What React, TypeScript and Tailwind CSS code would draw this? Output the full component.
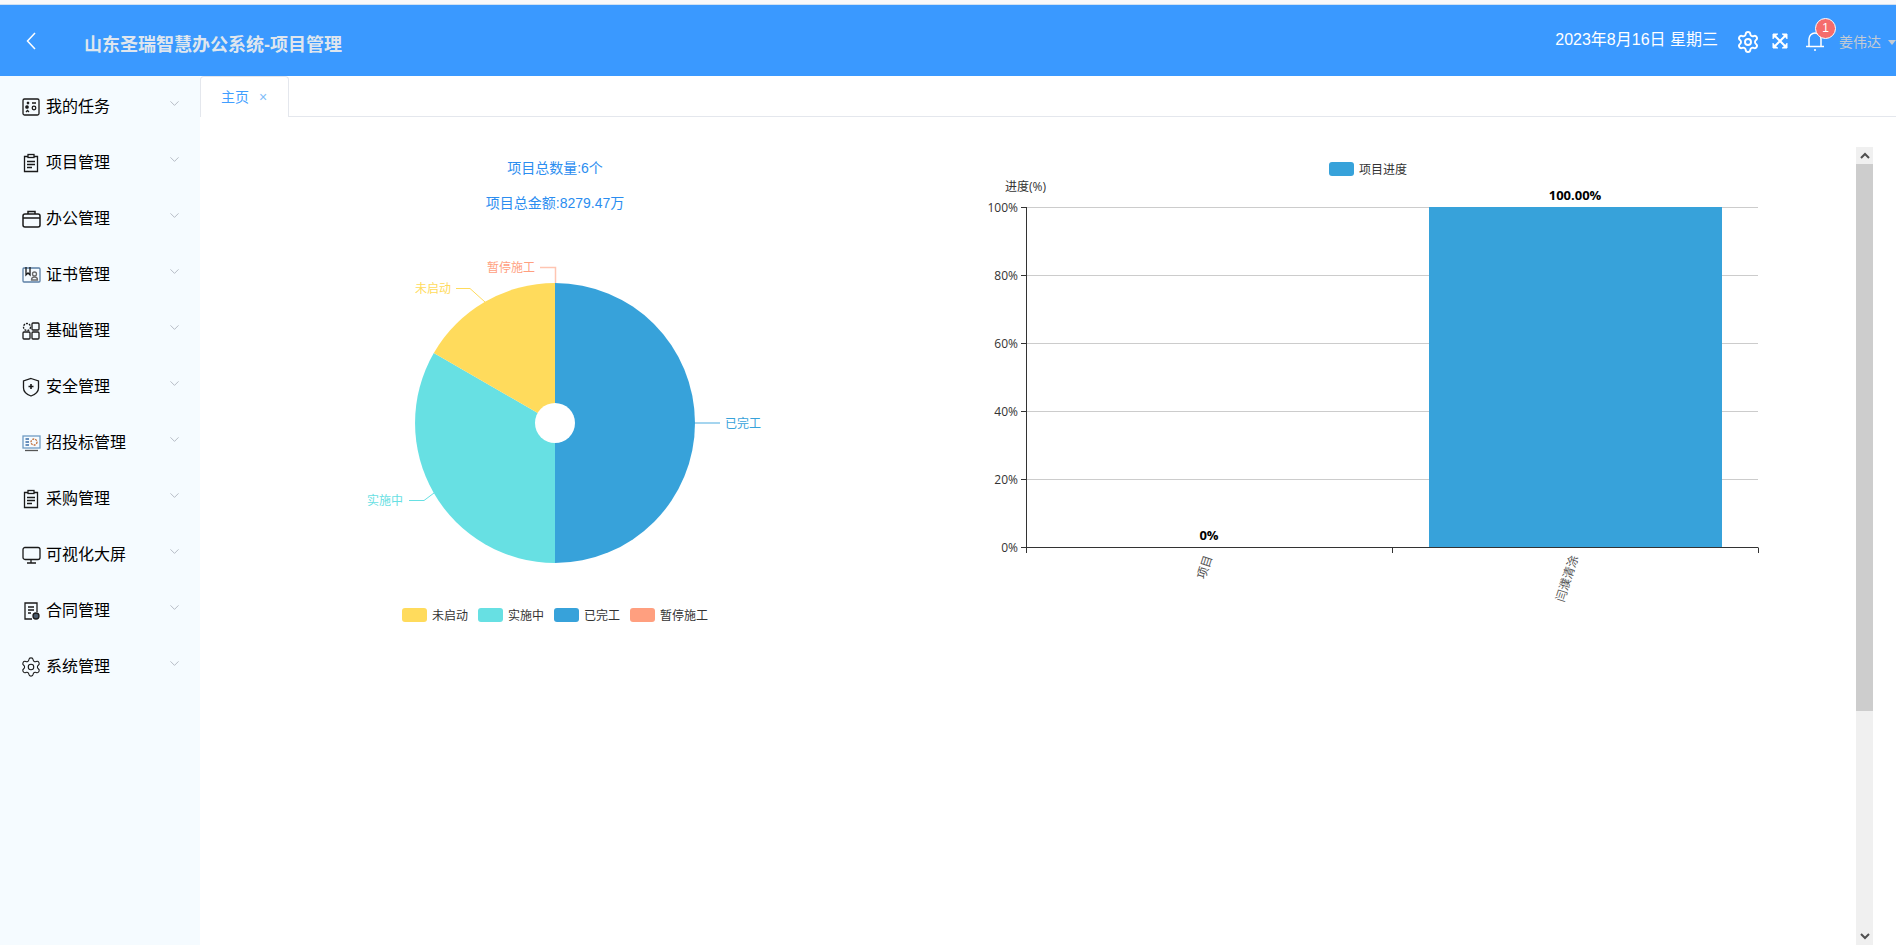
import React from "react";
import { ChevronDown, Settings } from "lucide-react";

const S = ({ children }: { children: React.ReactNode }) => (
  <svg width="20" height="20" viewBox="0 0 20 20" fill="none" stroke="#1a1a1a" strokeWidth="1.3" className="shrink-0">{children}</svg>
);

const icons: Record<string, React.ReactNode> = {
  task: <S><rect x="2" y="2" width="16" height="16" rx="1.5" /><circle cx="6" cy="10" r="1.2" fill="#1a1a1a" /><circle cx="13" cy="11" r="1.8" /><path d="M6 5l2 2M8 5l-2 2M11 6h4M5 15l1.5-1.5L8 15" /></S>,
  doc: <S><path d="M7 3.500H3.500v15H16.500v-15H13" /><rect x="7" y="1.500" width="6" height="3" /><path d="M6 8.500h8M6 11.500h8M6 14.500h5" /></S>,
  case: <S><rect x="2" y="5" width="17" height="13" rx="2" strokeWidth="1.500" /><path d="M7 5V2.500h7V5M2 9h17" strokeWidth="1.500" /></S>,
  cert: <S><rect x="2" y="3" width="17" height="14" rx="1" stroke="#5b7fa5" /><path d="M5 2v8l2-2 2 2V2" /><circle cx="13.500" cy="9" r="2" stroke="#6b6b6b" /><path d="M10.500 15c0-4 6-4 6 0z" stroke="#6b6b6b" /></S>,
  base: <S><circle cx="6" cy="6" r="3.500" strokeDasharray="2 1" /><rect x="11" y="2" width="7" height="7" rx="1" /><rect x="2" y="11" width="7" height="7" rx="1" /><rect x="11" y="11" width="7" height="7" rx="1" /></S>,
  shield: <S><path d="M10 1.500l7.500 2.500v7c0 4-3.500 6.500-7.500 8-4-1.500-7.500-4-7.500-8V4z" /><path d="M7.500 9.500h5M10 7v5" strokeWidth="1.600" /></S>,
  bid: <S><rect x="2" y="3" width="17" height="12" stroke="#6f9bc4" /><circle cx="13" cy="9" r="3" stroke="#c0703c" strokeDasharray="2 1" /><path d="M4.500 6h3.500M4.500 9h3.500M4.500 12h3.500" stroke="#3a6ea8" /><path d="M4 17.500h13" stroke="#555" /></S>,
  monitor: <S><rect x="2" y="2.500" width="17" height="12" rx="2" /><path d="M10 14.500v3M6 18h9" /></S>,
  contract: <S><path d="M11 18H4V2h12v9" /><path d="M7 6h6M7 9h6M7 12h3" /><circle cx="15" cy="15" r="3" fill="#4a5a6a" /></S>,
  gear: <Settings size={22} strokeWidth={1.200} color="#1a1a1a" className="-ml-[1px] shrink-0" />,
};

const menu: [string, string][] = [
  ["我的任务", "task"], ["项目管理", "doc"], ["办公管理", "case"], ["证书管理", "cert"], ["基础管理", "base"], ["安全管理", "shield"],
  ["招投标管理", "bid"], ["采购管理", "doc"], ["可视化大屏", "monitor"], ["合同管理", "contract"], ["系统管理", "gear"],
];

const cjk = { fontFamily: '"Liberation Sans", "Noto Sans CJK SC", sans-serif' };
const chartFont = '"Open Sans", "Noto Sans CJK SC", sans-serif';

function Pie() {
  const legend: [number, string, string][] = [[402, "#ffdb5c", "未启动"], [478, "#67e0e3", "实施中"], [554, "#37a2da", "已完工"], [630, "#ff9f7f", "暂停施工"]];
  return (
    <svg width="600" height="500" viewBox="250 130 600 500" className="shrink-0" fontFamily={chartFont} fontSize="12">
      <path d="M555 283A140 140 0 0 1 555 563Z" fill="#37a2da" />
      <path d="M555 563A140 140 0 0 1 433.800 353L555 423Z" fill="#67e0e3" />
      <path d="M433.800 353A140 140 0 0 1 555 283V423Z" fill="#ffdb5c" />
      <circle cx="555" cy="423" r="20" fill="#fff" />
      <path d="M540 267.500H555.500V283" fill="none" stroke="#ff9f7f" strokeOpacity="0.6" strokeWidth="1.500" />
      <path d="M456 288.500H470L485 302" fill="none" stroke="#ffdb5c" />
      <path d="M695 423H720" fill="none" stroke="#37a2da" strokeOpacity="0.6" strokeWidth="1.500" />
      <path d="M409 500.500H424L434 493" fill="none" stroke="#67e0e3" />
      <text x="487" y="271.500" fill="#ff9f7f">暂停施工</text>
      <text x="415" y="293" fill="#ffdb5c">未启动</text>
      <text x="725" y="427.500" fill="#37a2da">已完工</text>
      <text x="367" y="504.500" fill="#67e0e3">实施中</text>
      {legend.map(([x, c, t]) => (
        <g key={t}>
          <rect x={x} y="608" width="25" height="14" rx="3" fill={c} />
          <text x={x + 30} y="619.500" fill="#333">{t}</text>
        </g>
      ))}
    </svg>
  );
}

function Bars() {
  const ys: [number, string][] = [[207, "100%"], [275, "80%"], [343, "60%"], [411, "40%"], [479, "20%"], [547, "0%"]];
  return (
    <svg width="860" height="500" viewBox="960 130 860 500" className="shrink-0" fontFamily={chartFont} fontSize="12">
      <rect x="1329" y="162" width="25" height="14" rx="3" fill="#37a2da" />
      <text x="1359" y="173.500" fill="#333">项目进度</text>
      <text x="1005" y="190.500" fill="#333">进度(%)</text>
      {ys.map(([y, t]) => (
        <g key={t}>
          {y !== 547 && <path d={`M1027 ${y + 0.5}H1758`} stroke="#ccc" />}
          <path d={`M1021 ${y + 0.5}H1027`} stroke="#333" />
          <text x="1018" y={y + 4.500} textAnchor="end" fill="#333">{t}</text>
        </g>
      ))}
      <rect x="1429" y="207" width="293" height="340" fill="#37a2da" />
      <path d="M1026.500 207V548M1026 547.500H1758.500M1026.500 548v5M1392.500 548v5M1758.500 548v5" stroke="#333" fill="none" />
      <text x="1209" y="540" textAnchor="middle" fontWeight="700" fontSize="13" fill="#000">0%</text>
      <text x="1575" y="200" textAnchor="middle" fontWeight="700" fontSize="13" fill="#000">100.00%</text>
      <text transform="translate(1212.500 557) rotate(-72)" textAnchor="end" fill="#555">项目</text>
      <text transform="translate(1578.500 557) rotate(-72)" textAnchor="end" fill="#555">闫濮清涂</text>
    </svg>
  );
}

export default function App() {
  return (
    <div className="flex h-[945px] w-[1896px] flex-col overflow-hidden bg-white text-black" style={cjk}>
      <div className="h-[5px] shrink-0 border-b border-[#cfe0f2] bg-[#f8f8fa]" />
      <header className="flex h-[71px] shrink-0 items-center bg-[#3a99ff] text-white">
        <svg className="ml-[26px] mt-[1px] shrink-0" width="10" height="18" viewBox="0 0 10 18" fill="none" stroke="#fff" strokeWidth="1.500"><path d="M9 1L1.500 9L9 17" /></svg>
        <h1 className="ml-[48px] mt-[10px] text-[18px] font-bold text-[#dfe6ee]">山东圣瑞智慧办公系统-项目管理</h1>
        <div className="ml-auto mb-[1px] text-[16px]">2023年8月16日 星期三</div>
        <Settings className="ml-[18px] mt-[2px] shrink-0" size={24} strokeWidth={1.900} color="#fff" />
        <svg className="ml-[12px] shrink-0" width="16" height="16" viewBox="0 0 16 16" fill="none" stroke="#fff" strokeWidth="2">
          <path d="M3 3l10 10M13 3L3 13" />
          <path d="M1 6V1h5M10 1h5v5M15 10v5h-5M6 15H1v-5" fill="#fff" strokeWidth="1" />
        </svg>
        <div className="relative ml-[17px] h-[22px] w-[20px] shrink-0">
          <svg width="20" height="22" viewBox="0 0 20 22" fill="none" stroke="#fff" strokeWidth="1.500">
            <path d="M4 16V9a6 6 0 0 1 12 0v7M1 16.500h18M9 20h2" />
          </svg>
          <span className="absolute left-[10px] top-[-12px] flex h-[21px] w-[21px] items-center justify-center rounded-full border border-white bg-[#f56c6c] text-[12px] text-white">1</span>
        </div>
        <span className="ml-[14px] mt-[3px] text-[14px] text-[#c3cbd4]">姜伟达</span>
        <span className="ml-[7px] mt-[3px] h-0 w-0 border-x-[4px] border-t-[5px] border-x-transparent border-t-[#c3cbd4]" />
      </header>
      <div className="flex min-h-0 flex-1">
        <aside className="w-[200px] shrink-0 bg-[#f5fbff]">
          {menu.map(([t, k]) => (
            <div key={t} className="flex h-[56px] items-center pl-[21px] pr-[18px] pt-[5px]">
              <span className="w-[25px]">{icons[k]}</span>
              <span className="text-[16px] leading-none">{t}</span>
              <ChevronDown className="ml-auto mb-[7px] text-[#a8aeb8]" size={15} strokeWidth={1.300} />
            </div>
          ))}
        </aside>
        <main className="flex min-w-0 flex-1 flex-col">
          <div className="flex h-[41px] shrink-0 border-b border-[#e4e7ed]">
            <div className="-mb-px flex h-[41px] w-[89px] items-center rounded-t-[4px] border-x border-t border-[#e4e7ed] border-b-transparent bg-white pl-[20px] text-[14px] text-[#409eff]">
              主页
              <span className="ml-[10px] text-[14px] leading-none text-[#7fbcf8]">×</span>
            </div>
          </div>
          <div className="flex min-h-0 flex-1">
            <div className="flex w-[1656px] flex-col pt-[13px]">
              <div className="flex">
                <div className="relative w-[760px] shrink-0">
                  <div className="absolute left-[155px] top-[28px] w-[400px] text-center text-[14px] text-[#2b8df0]">
                    <p className="h-[35px]">项目总数量:6个</p>
                    <p>项目总金额:8279.47万</p>
                  </div>
                  <div className="ml-[50px]"><Pie /></div>
                </div>
                <Bars />
              </div>
            </div>
            <div className="mt-[30px] flex h-[798px] w-[17px] shrink-0 flex-col bg-[#f0f0f0]">
              <div className="flex h-[17px] shrink-0 items-center justify-center text-[#505050]">
                <svg width="10" height="7" viewBox="0 0 10 7" fill="none" stroke="currentColor" strokeWidth="2"><path d="M1 6l4-4 4 4" /></svg>
              </div>
              <div className="h-[547px] shrink-0 bg-[#cdcdcd]" />
              <div className="mt-auto flex h-[17px] shrink-0 items-center justify-center text-[#505050]">
                <svg width="10" height="7" viewBox="0 0 10 7" fill="none" stroke="currentColor" strokeWidth="2"><path d="M1 1l4 4 4-4" /></svg>
              </div>
            </div>
          </div>
        </main>
      </div>
    </div>
  );
}
